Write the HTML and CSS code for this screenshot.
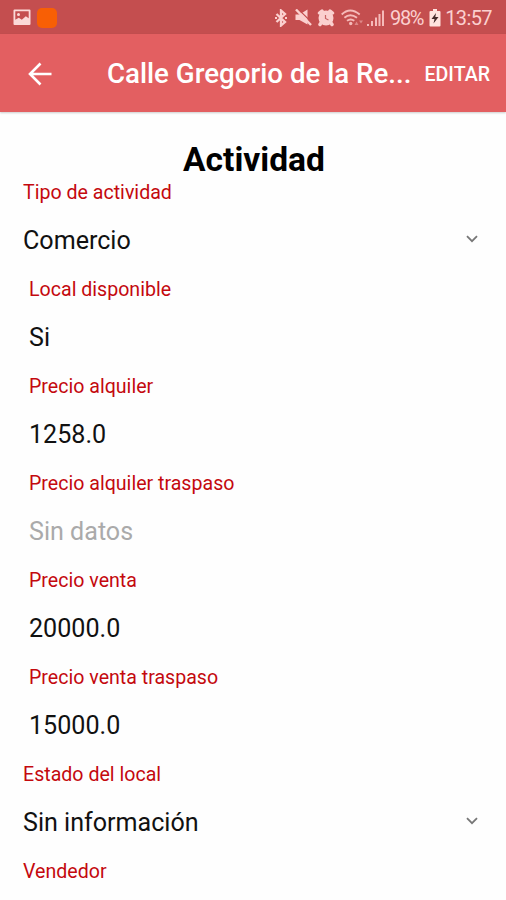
FILE: index.html
```html
<!DOCTYPE html>
<html lang="es">
<head>
	<meta charset="UTF-8">
	<title>Actividad</title>
	<link rel="stylesheet" href="styles.css">
</head>
<body>

<div class="statusbar">
	<div class="notificaciones">
		<svg width="18" height="17" viewBox="0 0 18 17">
			<path fill="#fbd9d8" fill-rule="evenodd" d="M1.500 0.500h15a1 1 0 0 1 1 1v13.500a1 1 0 0 1-1 1h-15a1 1 0 0 1-1-1v-13.500a1 1 0 0 1 1-1zM2.300 2.300v8.500l3.500-2 3 2 4-3.500 2.900 2v-7z"/>
			<circle cx="5.500" cy="5.500" r="1.500" fill="#fbd9d8"/>
		</svg>
		<span class="appNaranja"></span>
	</div>
	<div class="estado">
		<svg class="icoBluetooth" width="12" height="18" viewBox="0 0 12 18">
			<path fill="none" stroke="#fbd0cf" stroke-width="2.300" d="M1.500 5l8.500 8-4 3.500v-15l4 3.500-8.500 8"/>
			<path fill="#fbd0cf" d="M0 8h2v2h-2zM10 8h2v2h-2z"/>
		</svg>
		<svg class="icoMudo" width="17" height="17" viewBox="0 0 17 17">
			<path fill="#fbd0cf" d="M0.500 5.500h4l8-5v15l-8-4.500h-4z"/>
			<path stroke="#c44e4f" stroke-width="1.200" d="M3 0l14 13.500"/>
			<path stroke="#fbd0cf" stroke-width="2.400" d="M1 0.500l15 15.500"/>
		</svg>
		<svg class="icoAlarma" width="18" height="18" viewBox="0 0 18 18">
			<path stroke="#fbd0cf" stroke-width="3.500" stroke-linecap="round" d="M2.500 4l2.500-2M15.500 4l-2.500-2M4 14l-1 1.500M14 14l1 1.500"/>
			<circle cx="9" cy="9" r="7.500" fill="#fbd0cf"/>
			<path fill="none" stroke="#c86565" stroke-width="1.200" d="M8.500 6v3.500l3 1.500"/>
		</svg>
		<svg class="icoWifi" width="22" height="18" viewBox="0 0 22 18">
			<g fill="none" stroke="#f5bab9" stroke-width="1.900">
				<path d="M0.700 5.500q8.300-8 18 0"/>
				<path d="M3.400 8.800q5.700-5.200 12.600 0"/>
				<path d="M6 11.800q3.700-2.800 7.300 0"/>
			</g>
			<circle cx="9.700" cy="14.500" r="1.700" fill="#f5bab9"/>
			<path fill="#dd8888" d="M15.500 12.500l2 3.500h-4zM20 14.500l-2-3h4z"/>
		</svg>
		<svg class="icoSenal" width="17" height="16" viewBox="0 0 17 16">
			<path fill="#f5bab9" d="M0 14h2v2h-2zM4 11h2v5h-2zM8 7.500h2v8.500h-2zM11.500 4h2v12h-2zM15 0.500h2v15.500h-2z"/>
		</svg>
		<span class="bateria">98%</span>
		<svg class="icoBateria" width="12" height="18" viewBox="0 0 12 18">
			<path fill="#ffe4df" d="M4 0h4v2h2.500q1 0 1 1v13.500q0 1-1 1h-9q-1 0-1-1v-13.500q0-1 1-1h2.500z"/>
			<path fill="#442a2a" d="M7 4l-4.500 6h3l-1 4.500 5-6.500h-3.200z"/>
		</svg>
		<span class="hora">13:57</span>
	</div>
</div>

<div class="cabecera">
	<svg class="volver" width="24" height="24" viewBox="0 0 24 24">
		<path fill="none" stroke="#fff" stroke-width="2.600" d="M12.500 1.500l-10.500 10.500 10.500 10.500M2 12h21.500"/>
	</svg>
	<div class="titulo">Calle Gregorio de la Re...</div>
	<div class="editar">EDITAR</div>
</div>

<div class="contenido">
	<h1>Actividad</h1>

	<div class="campo">
		<div class="etiqueta">Tipo de actividad</div>
		<div class="valor">
			<span>Comercio</span>
			<svg class="flecha" width="12" height="8" viewBox="0 0 12 8"><path d="M1 1.200l5 5 5-5"/></svg>
		</div>
	</div>
	<div class="campo texto">
		<div class="etiqueta">Local disponible</div>
		<div class="valor">Si</div>
	</div>
	<div class="campo texto">
		<div class="etiqueta">Precio alquiler</div>
		<div class="valor">1258.0</div>
	</div>
	<div class="campo texto">
		<div class="etiqueta">Precio alquiler traspaso</div>
		<div class="valor vacio">Sin datos</div>
	</div>
	<div class="campo texto">
		<div class="etiqueta">Precio venta</div>
		<div class="valor">20000.0</div>
	</div>
	<div class="campo texto">
		<div class="etiqueta">Precio venta traspaso</div>
		<div class="valor">15000.0</div>
	</div>
	<div class="campo">
		<div class="etiqueta">Estado del local</div>
		<div class="valor">
			<span>Sin información</span>
			<svg class="flecha" width="12" height="8" viewBox="0 0 12 8"><path d="M1 1.200l5 5 5-5"/></svg>
		</div>
	</div>
	<div class="campo ultimo">
		<div class="etiqueta">Vendedor</div>
	</div>
</div>

</body>
</html>
```
FILE: styles.css
```css
body {
	margin:0;
	background-color:#fefefe;
	font-family:Roboto, sans-serif;
	color:#111;
}
svg {
	display:block;
	flex:none;
}

/* barra de estado */
.statusbar {
	display:flex;
	justify-content:space-between;
	align-items:center;
	box-sizing:border-box;
	height:34px;
	padding:1px 14px 0 13px;
	background-color:#c44e4f;
	color:#fbd0cf;
}
.notificaciones, .estado {
	display:flex;
	align-items:center;
}
.appNaranja {
	width:20px;
	height:20px;
	margin-left:6px;
	border-radius:5px;
	background-color:#f85f05;
}
.icoMudo { margin-left:8px; }
.icoAlarma { margin-left:5px; }
.icoWifi { margin-left:6px; }
.icoSenal { margin-left:4px; }
.bateria {
	margin-left:6px;
	font-size:20px;
	letter-spacing:-1.3px;
}
.icoBateria { margin-left:6px; }
.hora {
	margin-left:4px;
	font-size:20px;
	letter-spacing:-0.6px;
}

/* cabecera */
.cabecera {
	display:flex;
	align-items:center;
	height:78px;
	padding:0 16px 0 28px;
	background-color:#e35f61;
	color:#fff;
	box-shadow:0 1px 2px rgba(0,0,0,0.2);
	white-space:nowrap;
}
.volver {
	margin-top:1px;
}
.titulo {
	flex:1;
	padding-top:1px;
	margin-left:55px;
	font-size:27.7px;
	font-weight:500;
}
.editar {
	padding-top:3px;
	font-size:19.6px;
	font-weight:500;
}

/* formulario */
.contenido {
	padding:30px 23px 0;
}
h1 {
	margin:0;
	height:38px;
	padding-left:2px;
	line-height:36px;
	font-size:33.6px;
	font-weight:700;
	text-align:center;
	color:#000;
}
.campo {
	height:97px;
}
.ultimo {
	height:36px;
}
.texto {
	padding-left:6px;
}
.etiqueta {
	height:36px;
	line-height:26px;
	font-size:19.6px;
	color:#c4090e;
}
.valor {
	display:flex;
	justify-content:space-between;
	align-items:center;
	height:48px;
	font-size:25.1px;
}
.vacio {
	color:#aaa;
}
.flecha {
	margin:-3px 5px 0 0;
	fill:none;
	stroke:#777;
	stroke-width:1.8;
}
```
